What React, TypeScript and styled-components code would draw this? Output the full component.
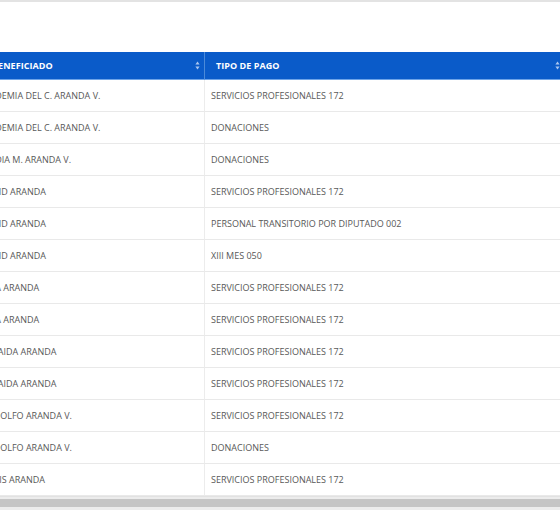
import React, { useLayoutEffect, useRef } from "react";
import styled, { createGlobalStyle } from "styled-components";

const Global = createGlobalStyle`
  html, body { margin: 0; padding: 0; background: #ffffff; }
  body { font-family: "Open Sans", "Liberation Sans", sans-serif; }
`;

const Page = styled.div`
  width: 560px;
  height: 510px;
  display: flex;
  flex-direction: column;
  overflow: hidden;
  background: #fff;
`;

const TopRule = styled.div`
  height: 2px;
  background: #e3e3e3;
  flex: none;
`;

const Spacer = styled.div`
  height: 50px;
  flex: none;
`;

const Scroller = styled.div`
  overflow-x: auto;
  overflow-y: hidden;
  scrollbar-width: none;
  flex: none;
  &::-webkit-scrollbar { display: none; }
`;

const Table = styled.div`
  width: 583px;
  display: grid;
  grid-template-columns: 223px 360px;
`;

const HeadCell = styled.div<{ $divider?: boolean }>`
  height: 28px;
  box-sizing: border-box;
  background: #0a5bc9;
  border-bottom: 1px solid #6ea4e8;
  border-left: ${(p) => (p.$divider ? "1px solid #4b8ad9" : "none")};
  padding: 0 4px 0 11px;
  display: flex;
  align-items: center;
  justify-content: space-between;
  color: #ffffff;
  font-size: 9px;
  font-weight: 700;
  letter-spacing: 0.05px;
  white-space: nowrap;
`;

const Cell = styled.div<{ $divider?: boolean }>`
  height: 32px;
  box-sizing: border-box;
  border-bottom: 1px solid #e9e9e9;
  border-left: ${(p) => (p.$divider ? "1px solid #ececec" : "none")};
  padding: 0 0 0 ${(p) => (p.$divider ? "6px" : "7px")};
  display: flex;
  align-items: center;
  color: #585858;
  font-size: 9px;
  white-space: nowrap;
  overflow: hidden;
`;

const Track = styled.div`
  height: 14px;
  flex: none;
  background: #ececec;
  border-top: 1px solid #e2e2e2;
  box-sizing: border-box;
  display: flex;
  padding: 2px 0 3px;
`;

const Thumb = styled.div`
  flex: 1;
  background: #c5c5c5;
`;

const SortIcon = () => (
  <svg width="5" height="9" viewBox="0 0 5 9" style={{ flex: "none" }}>
    <path d="M2.5 0.5 L4.6 3.6 H0.4 Z" fill="#a9c6ef" />
    <path d="M2.5 8.5 L4.6 5.4 H0.4 Z" fill="#a9c6ef" />
  </svg>
);

const rows: [string, string][] = [
  ["NOEMIA DEL C. ARANDA V.", "SERVICIOS PROFESIONALES 172"],
  ["NOEMIA DEL C. ARANDA V.", "DONACIONES"],
  ["LIDIA M. ARANDA V.", "DONACIONES"],
  ["SAID ARANDA", "SERVICIOS PROFESIONALES 172"],
  ["SAID ARANDA", "PERSONAL TRANSITORIO POR DIPUTADO 002"],
  ["SAID ARANDA", "XIII MES 050"],
  ["LIA ARANDA", "SERVICIOS PROFESIONALES 172"],
  ["LIA ARANDA", "SERVICIOS PROFESIONALES 172"],
  ["ELAIDA ARANDA", "SERVICIOS PROFESIONALES 172"],
  ["ELAIDA ARANDA", "SERVICIOS PROFESIONALES 172"],
  ["ADOLFO ARANDA V.", "SERVICIOS PROFESIONALES 172"],
  ["ADOLFO ARANDA V.", "DONACIONES"],
  ["LUIS ARANDA", "SERVICIOS PROFESIONALES 172"],
];

export default function App() {
  const ref = useRef<HTMLDivElement>(null);
  useLayoutEffect(() => {
    if (ref.current) ref.current.scrollLeft = 19;
  }, []);
  return (
    <Page>
      <Global />
      <TopRule />
      <Spacer />
      <Scroller ref={ref}>
        <Table>
          <HeadCell>
            <span>BENEFICIADO</span>
            <SortIcon />
          </HeadCell>
          <HeadCell $divider>
            <span>TIPO DE PAGO</span>
            <SortIcon />
          </HeadCell>
          {rows.map(([a, b], i) => (
            <React.Fragment key={i}>
              <Cell>{a}</Cell>
              <Cell $divider>{b}</Cell>
            </React.Fragment>
          ))}
        </Table>
      </Scroller>
      <Track>
        <Thumb />
      </Track>
    </Page>
  );
}
